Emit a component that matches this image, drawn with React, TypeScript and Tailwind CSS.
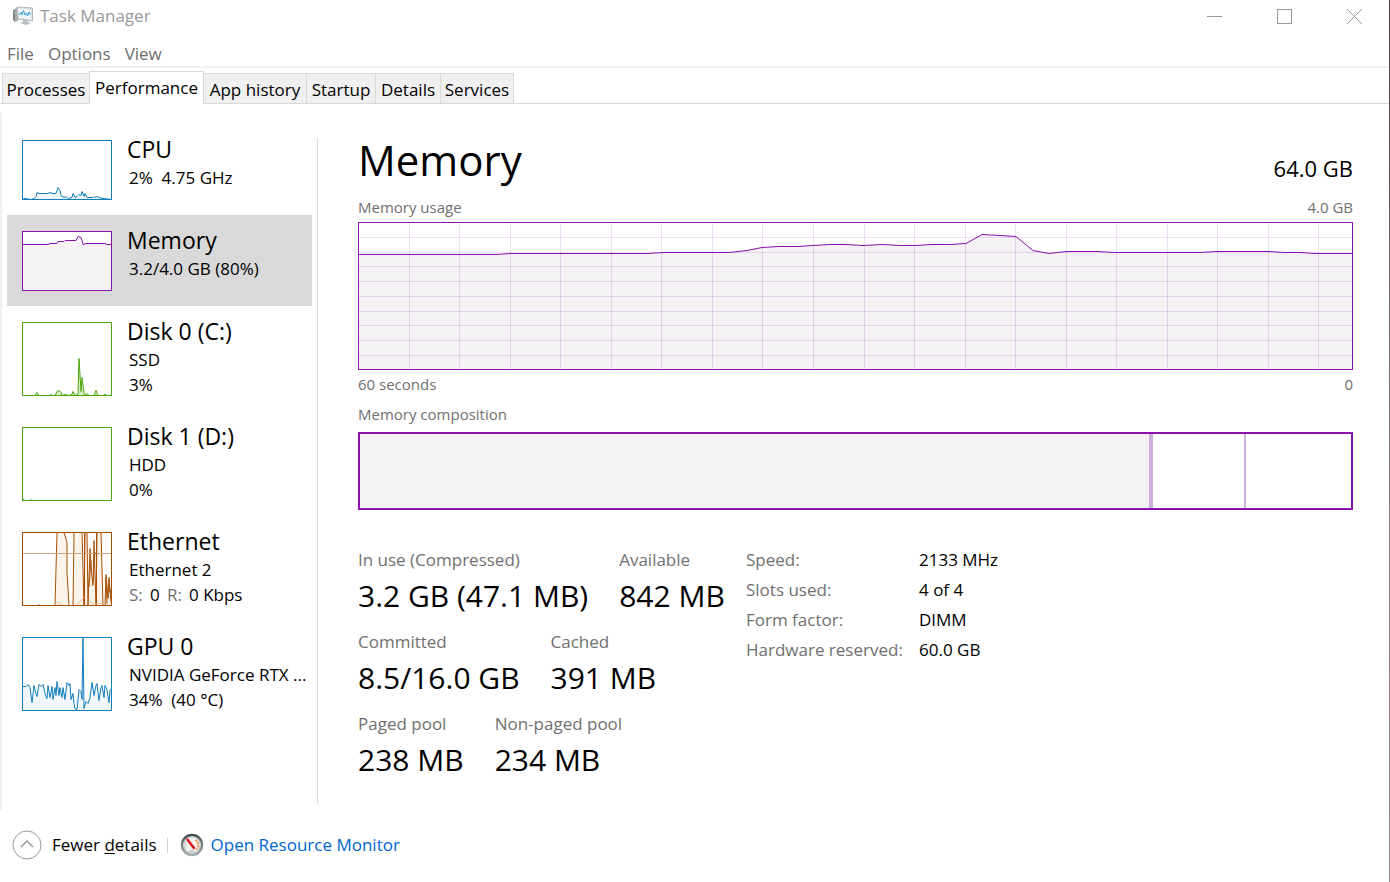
import React from "react";

type Thumb = { color: string; fill: string; height: number; line: string; extra?: React.ReactNode };
type Resource = {
  name: string;
  lines: React.ReactNode[];
  thumb: Thumb;
  selected?: boolean;
};

const resources: Resource[] = [
  {
    name: "CPU",
    lines: ["2%\u00a0 4.75 GHz"],
    thumb: {
      color: "#117dbb",
      fill: "#f1f6fa",
      height: 60,
      line: "0,59 3,58 9,59 12,58 14,56 15,52 17,53 26,53 28,52 31,53 34,53 36,47 38,50 39,55 42,57 44,56 46,58 50,57 51,53 53,57 55,56 57,54 59,55 60,51 62,56 63,53 65,57 71,57 72,56 73,57 75,56 77,57 81,58 90,59",
    },
  },
  {
    name: "Memory",
    lines: ["3.2/4.0 GB (80%)"],
    selected: true,
    thumb: {
      color: "#8b12ae",
      fill: "#f4f2f4",
      height: 60,
      line: "0,13 26,13 28,12 35,12 36,10 42,10 43,9 50,9 54,9 56,5 59,6 60,9 61,13 64,12 83,12 85,13 90,13",
    },
  },
  {
    name: "Disk 0 (C:)",
    lines: ["SSD", "3%"],
    thumb: {
      color: "#4da60c",
      fill: "#d9ecc9",
      height: 74,
      line: "0,73 13,73 15,70 17,73 28,73 29,72 30,73 33,73 35,69 37,68 39,70 40,73 43,72 47,73 50,72 51,69 53,73 56,72 57,36 59,69 60,55 62,70 63,73 65,71 67,73 72,73 74,68 76,73 81,73 83,72 85,73 90,73",
    },
  },
  {
    name: "Disk 1 (D:)",
    lines: ["HDD", "0%"],
    thumb: { color: "#4da60c", fill: "#eff7e9", height: 74, line: "0,73 2,72 3,73 8,73 9,72 10,73 90,73" },
  },
  {
    name: "Ethernet",
    lines: [
      "Ethernet 2",
      <span className="flex">
        <span className="w-[21px] text-[#707070]">S:</span>
        <span className="w-[17px]">0</span>
        <span className="w-[22px] text-[#707070]">R:</span>
        <span>0 Kbps</span>
      </span>,
    ],
    thumb: {
      color: "#a74f01",
      fill: "#fcf3eb",
      height: 74,
      line: "0,73 16,73 17,72 18,73 33,73 35,0 42,0 45,10 45,40 47,73 51,73 52,0 60,0 62,73 63,0 65,0 66,73 68,16 70,45 71,53 72,8 74,73 75,0 79,0 81,73 83,73 84,42 86,66 87,45 88,60 90,55",
      extra: (
        <>
          <path d="M0 21.5H90" stroke="#d3a780" />
          <path d="M74.500 0V73M62.500 0V73M67 55L69 28M71 50L73 20M84 45L85 72M87 48L89 70" stroke="#a74f01" fill="none" />
          <path d="M33 72L36 70L39 73M55 72L60 68L63 65L67 67L70 72L80 71L84 73" stroke="#f1a27c" strokeDasharray="2 1" fill="none" />
        </>
      ),
    },
  },
  {
    name: "GPU 0",
    lines: ["NVIDIA GeForce RTX ...", "34%\u00a0 (40 °C)"],
    thumb: {
      color: "#117dbb",
      fill: "#f1f6fa",
      height: 74,
      line: "0,49 4,49 6,47 8,50 10,65 12,48 14,56 15,59 17,47 19,49 21,47 23,56 25,61 26,48 28,60 30,49 31,62 33,50 34,58 35,44 37,58 38,50 40,60 41,50 43,62 45,45 47,48 48,46 49,62 51,56 52,66 53,71 55,72 57,52 59,54 60,62 61,0 62,71 64,64 66,66 68,60 70,45 72,58 74,48 75,46 77,63 79,50 80,48 82,60 83,48 85,52 87,65 88,53 90,50",
    },
  },
];

function MiniChart({ color, fill, height, line, extra }: Thumb) {
  return (
    <svg width={90} height={height} viewBox={`0 0 90 ${height}`} className="mt-[5px] shrink-0 bg-white" aria-hidden="true">
      <polygon points={`0,${height} ${line} 90,${height}`} fill={fill} />
      <polyline points={line} transform="translate(0 .5)" fill="none" stroke={color} strokeWidth={1} />
      {extra}
      <rect x=".5" y=".5" width={89} height={height - 1} fill="none" stroke={color} />
    </svg>
  );
}

const usage =
  "0,32 139,32 152,31 290,31 305,30 371,30 389,28 404,25 421,24 440,24 455,23 472,22 487,22 505,23 524,22 542,23 557,23 574,22 592,22 608,21 624,12 642,13 658,14 675,28 691,31 709,29 739,29 757,30 842,30 859,29 910,29 927,30 942,30 957,31 995,31";

function UsageChart() {
  return (
    <svg viewBox="0 0 995 148" preserveAspectRatio="none" className="block h-[148px] w-full" role="img" aria-label="Memory usage graph">
      <polygon points={`0,148 ${usage} 995,148`} fill="#f4f2f4" />
      {Array.from({ length: 19 }, (_, i) => {
        const x = Math.round(50.55 * (i + 1)) + 0.5;
        return <line key={i} x1={x} x2={x} y1={0} y2={148} stroke="#8b12ae" strokeOpacity={0.14} />;
      })}
      {Array.from({ length: 9 }, (_, i) => {
        const y = Math.round(14.75 * (i + 1)) + 0.5;
        return <line key={i} x1={0} x2={995} y1={y} y2={y} stroke="#8b12ae" strokeOpacity={0.14} />;
      })}
      <polyline points={usage} transform="translate(0 .5)" fill="none" stroke="#8b12ae" strokeWidth={1} />
      <rect x=".5" y=".5" width="994" height="147" fill="none" stroke="#8b12ae" />
    </svg>
  );
}

function Stat({ label, value }: { label: string; value: string }) {
  return (
    <div>
      <dt className="text-[17px] leading-[30px] text-[#707070]">{label}</dt>
      <dd className="text-[30px] leading-[42px]">{value}</dd>
    </div>
  );
}

const tabs = [
  { label: "Processes", cls: "w-[87px]" },
  { label: "Performance", cls: "w-[115px]" },
  { label: "App history", cls: "w-[103px]" },
  { label: "Startup", cls: "w-[69px]" },
  { label: "Details", cls: "w-[65px]" },
  { label: "Services", cls: "w-[73px]" },
];

const hardware = [
  ["Speed:", "2133 MHz"],
  ["Slots used:", "4 of 4"],
  ["Form factor:", "DIMM"],
  ["Hardware reserved:", "60.0 GB"],
];

const statRows = [
  [["In use (Compressed)", "3.2 GB (47.1 MB)"], ["Available", "842 MB"]],
  [["Committed", "8.5/16.0 GB"], ["Cached", "391 MB"]],
  [["Paged pool", "238 MB"], ["Non-paged pool", "234 MB"]],
];

function AppIcon() {
  return (
    <svg width="22" height="20" viewBox="0 0 22 20" aria-hidden="true">
      <path d="M1 4L4 2L6 3V15L2 16Z" fill="#a9adaa" />
      <path d="M1 5L3 4V15L1 14Z" fill="#7d827e" />
      <path d="M2 6L3 6V8H2Z" fill="#7fc47a" />
      <path d="M5 1L20.500 2V15L6 13Z" fill="#dcdfe1" stroke="#b4b8bb" />
      <path d="M6.500 2.500L19 3.500V13.500L7 12Z" fill="#f1f8fc" />
      <path d="M7 9L9 6L10 9L11.500 4.500L13 9L14.500 7L15.500 10L17 6L18.500 9" fill="none" stroke="#3d9ed0" />
      <path d="M11 13.500L15 14L16 16L19 17L14 19L8 17L11 16Z" fill="#b9bdc0" />
    </svg>
  );
}

function GaugeIcon() {
  return (
    <svg width="24" height="24" viewBox="0 0 24 24" aria-hidden="true">
      <defs>
        <linearGradient id="rim" x1="0" y1="0" x2="0" y2="1">
          <stop offset="0" stopColor="#3e4648" />
          <stop offset=".5" stopColor="#7b8386" />
          <stop offset="1" stopColor="#aab0b2" />
        </linearGradient>
      </defs>
      <circle cx="12" cy="12" r="11.200" fill="url(#rim)" />
      <circle cx="12" cy="12" r="9" fill="#c9cdcd" />
      <circle cx="12" cy="12" r="7.500" fill="#f3f1ed" />
      <path d="M6.500 15A6 6 0 0 1 8 7.500" fill="none" stroke="#aaa" strokeDasharray="1 1" />
      <path d="M15.500 7A6 6 0 0 1 16 16.500" fill="none" stroke="#f09a50" strokeWidth="2" strokeDasharray="2 1" />
      <path d="M6 5L8.500 6L15.500 15L13.500 16.500L7 8Z" fill="#d8131b" />
      <path d="M9 18H14" stroke="#a5a5a5" />
    </svg>
  );
}

export default function App() {
  return (
    <div className="flex min-h-screen bg-white font-['Open_Sans','Noto_Sans',sans-serif] text-black">
      <div className="flex min-w-0 flex-1 flex-col">
        <header className="flex h-8 items-center justify-between">
          <div className="flex items-center gap-[6px] pl-3 text-[17px] text-[#999999]">
            <AppIcon />
            <h1>Task Manager</h1>
          </div>
          <div className="flex h-full">
            <button aria-label="Minimize" className="flex w-[70px] items-center justify-center">
              <svg width="15" height="15"><path d="M0 7.500H15" stroke="#999" /></svg>
            </button>
            <button aria-label="Maximize" className="flex w-[70px] items-center justify-center">
              <svg width="15" height="15"><rect x=".5" y=".5" width="14" height="14" fill="none" stroke="#999" /></svg>
            </button>
            <button aria-label="Close" className="flex w-[70px] items-center justify-center">
              <svg width="15" height="15"><path d="M0 0L15 15M15 0L0 15" stroke="#999" /></svg>
            </button>
          </div>
        </header>

        <nav aria-label="Menu" className="flex h-9 items-center gap-[14px] border-b-2 border-[#f0f0f0] pt-[10px] pl-[7px] text-[17px] text-[#6d6d6d]">
          <button>File</button>
          <button>Options</button>
          <button>View</button>
        </nav>

        <div role="tablist" className="flex h-9 items-end border-b border-[#d9d9d9] pl-[2px] text-[17px]">
          {tabs.map(({ label, cls }, i) => (
            <button
              key={label}
              role="tab"
              aria-selected={i === 1}
              className={`${cls} shrink-0 whitespace-nowrap border-[#d9d9d9] ${
                i === 1 ? "-mb-px h-[33px] border border-b-0 bg-white" : `h-[30px] border-t bg-[#f0f0f0] pt-[2px] ${i === 0 ? "border-l" : "border-r"}`
              }`}
            >
              {label}
            </button>
          ))}
        </div>

        <main className="mt-[9px] flex border-l-2 border-[#f0f0f0]">
          <aside className="w-[310px] shrink-0 pt-[11px] pl-[5px]">
            {resources.map((r) => (
              <button
                key={r.name}
                className={`flex min-h-[91px] w-full items-start gap-[15px] pt-[11px] pb-[14px] pl-[15px] text-left ${r.selected ? "bg-[#d9d9d9]" : ""}`}
              >
                <MiniChart {...r.thumb} />
                <span className="block min-w-0 whitespace-nowrap">
                  <span className="mb-[2px] block text-[23px] leading-[28px]">{r.name}</span>
                  {r.lines.map((l, i) => (
                    <span key={i} className="block pl-[2px] text-[17px] leading-[25px]">{l}</span>
                  ))}
                </span>
              </button>
            ))}
          </aside>

          <section className="mt-[25px] mb-[6px] ml-[5px] min-w-0 flex-1 border-l border-[#d9d9d9] pr-9 pb-[23px] pl-10">
            <div className="flex h-[56px] items-start justify-between">
              <h2 className="text-[42px] leading-[44px]">Memory</h2>
              <span className="self-center pt-1 text-[22px]">64.0 GB</span>
            </div>
            <div className="mb-[2px] flex justify-between text-[15px] leading-[26px] text-[#707070]">
              <span>Memory usage</span>
              <span>4.0 GB</span>
            </div>
            <UsageChart />
            <div className="flex justify-between text-[15px] leading-[28px] text-[#707070]">
              <span>60 seconds</span>
              <span>0</span>
            </div>
            <div className="pb-[2px] text-[15px] leading-[32px] text-[#707070]">Memory composition</div>
            <div className="flex h-[78px] border-2 border-[#8b12ae]">
              <div className="w-[80%] border-r-4 border-[#cdb0d9] bg-[#f4f2f4]" />
              <div className="flex-1" />
              <div className="w-[107px] border-l-2 border-[#cdb0d9]" />
            </div>

            <div className="mt-[35px] flex gap-[18px]">
              <div className="flex w-[370px] shrink-0 flex-col gap-[10px]">
                {statRows.map((row) => (
                  <dl key={row[0][0]} className="flex gap-[31px] whitespace-nowrap">
                    {row.map(([label, value]) => (
                      <Stat key={label} label={label} value={value} />
                    ))}
                  </dl>
                ))}
              </div>
              <table className="self-start text-left text-[17px] leading-[30px] whitespace-nowrap">
                <tbody>
                  {hardware.map(([k, v]) => (
                    <tr key={k}>
                      <th scope="row" className="w-[173px] p-0 font-normal text-[#707070]">{k}</th>
                      <td className="p-0">{v}</td>
                    </tr>
                  ))}
                </tbody>
              </table>
            </div>
          </section>
        </main>

        <footer className="flex items-center pt-5 pb-5 pl-3 text-[17px]">
          <button className="flex items-center gap-[10px]">
            <svg width="30" height="30" fill="none" stroke="#999" aria-hidden="true">
              <circle cx="15" cy="15" r="14" />
              <path d="M9 17L15 11L21 17" strokeWidth="1.500" />
            </svg>
            <span>Fewer <span className="underline underline-offset-2">d</span>etails</span>
          </button>
          <span className="mr-3 ml-[10px] h-[15px] w-px bg-[#d0d0d0]" />
          <a href="#resource-monitor" className="flex items-center gap-[7px] text-[#0066cc]">
            <GaugeIcon />
            Open Resource Monitor
          </a>
        </footer>
      </div>
      <div className="w-px bg-linear-to-b from-[#4d414a] via-[#807a80] to-[#9a7a82]" />
    </div>
  );
}
